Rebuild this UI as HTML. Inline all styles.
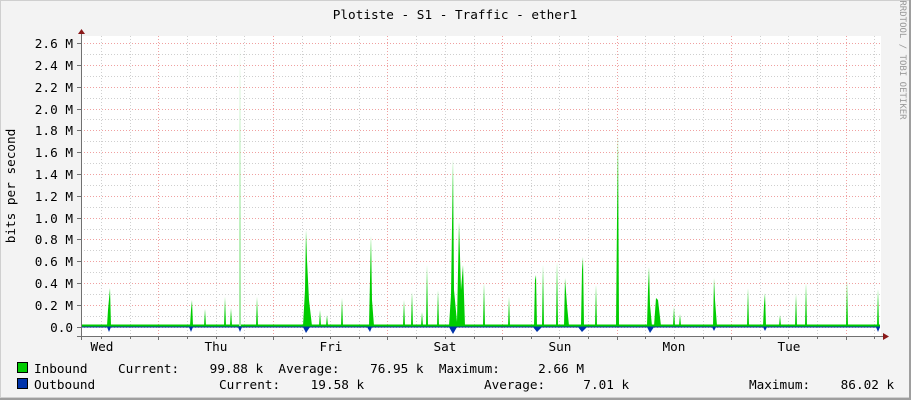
<!DOCTYPE html>
<html><head><meta charset="utf-8"><style>
html,body{margin:0;padding:0;background:#f3f3f3;}
svg{display:block;}
text{font-family:"DejaVu Sans Mono","Liberation Mono",monospace;font-size:12.7px;fill:#000;}
</style></head><body>
<svg width="911" height="400" viewBox="0 0 911 400" xmlns="http://www.w3.org/2000/svg">
<rect x="0" y="0" width="911" height="400" fill="#f3f3f3"/>
<rect x="0.5" y="0.5" width="909" height="397" fill="none" stroke="#cfcfcf"/>
<line x1="0" y1="399" x2="911" y2="399" stroke="#9e9e9e" stroke-width="2"/>
<line x1="910" y1="0" x2="910" y2="400" stroke="#9e9e9e" stroke-width="2"/>
<rect x="81" y="36" width="800" height="300" fill="#fff"/>
<g stroke="#cfcfcf" stroke-dasharray="1,2" stroke-width="1">
<line x1="81" y1="316.5" x2="881" y2="316.5"/><line x1="81" y1="294.5" x2="881" y2="294.5"/><line x1="81" y1="272.5" x2="881" y2="272.5"/><line x1="81" y1="250.5" x2="881" y2="250.5"/><line x1="81" y1="229.5" x2="881" y2="229.5"/><line x1="81" y1="207.5" x2="881" y2="207.5"/><line x1="81" y1="185.5" x2="881" y2="185.5"/><line x1="81" y1="163.5" x2="881" y2="163.5"/><line x1="81" y1="141.5" x2="881" y2="141.5"/><line x1="81" y1="119.5" x2="881" y2="119.5"/><line x1="81" y1="98.5" x2="881" y2="98.5"/><line x1="81" y1="76.5" x2="881" y2="76.5"/><line x1="81" y1="54.5" x2="881" y2="54.5"/>
<line x1="101.5" y1="36" x2="101.5" y2="336"/><line x1="130.5" y1="36" x2="130.5" y2="336"/><line x1="187.5" y1="36" x2="187.5" y2="336"/><line x1="216.5" y1="36" x2="216.5" y2="336"/><line x1="244.5" y1="36" x2="244.5" y2="336"/><line x1="302.5" y1="36" x2="302.5" y2="336"/><line x1="330.5" y1="36" x2="330.5" y2="336"/><line x1="359.5" y1="36" x2="359.5" y2="336"/><line x1="416.5" y1="36" x2="416.5" y2="336"/><line x1="445.5" y1="36" x2="445.5" y2="336"/><line x1="474.5" y1="36" x2="474.5" y2="336"/><line x1="531.5" y1="36" x2="531.5" y2="336"/><line x1="559.5" y1="36" x2="559.5" y2="336"/><line x1="588.5" y1="36" x2="588.5" y2="336"/><line x1="645.5" y1="36" x2="645.5" y2="336"/><line x1="674.5" y1="36" x2="674.5" y2="336"/><line x1="703.5" y1="36" x2="703.5" y2="336"/><line x1="760.5" y1="36" x2="760.5" y2="336"/><line x1="788.5" y1="36" x2="788.5" y2="336"/><line x1="817.5" y1="36" x2="817.5" y2="336"/><line x1="874.5" y1="36" x2="874.5" y2="336"/>
</g>
<g stroke="#f0a0a0" stroke-dasharray="1,2" stroke-width="1">
<line x1="81" y1="327.5" x2="881" y2="327.5"/><line x1="81" y1="305.5" x2="881" y2="305.5"/><line x1="81" y1="283.5" x2="881" y2="283.5"/><line x1="81" y1="261.5" x2="881" y2="261.5"/><line x1="81" y1="239.5" x2="881" y2="239.5"/><line x1="81" y1="218.5" x2="881" y2="218.5"/><line x1="81" y1="196.5" x2="881" y2="196.5"/><line x1="81" y1="174.5" x2="881" y2="174.5"/><line x1="81" y1="152.5" x2="881" y2="152.5"/><line x1="81" y1="130.5" x2="881" y2="130.5"/><line x1="81" y1="109.5" x2="881" y2="109.5"/><line x1="81" y1="87.5" x2="881" y2="87.5"/><line x1="81" y1="65.5" x2="881" y2="65.5"/><line x1="81" y1="43.5" x2="881" y2="43.5"/>
<line x1="158.5" y1="36" x2="158.5" y2="340"/><line x1="273.5" y1="36" x2="273.5" y2="340"/><line x1="387.5" y1="36" x2="387.5" y2="340"/><line x1="502.5" y1="36" x2="502.5" y2="340"/><line x1="617.5" y1="36" x2="617.5" y2="340"/><line x1="731.5" y1="36" x2="731.5" y2="340"/><line x1="846.5" y1="36" x2="846.5" y2="340"/>
</g>
<!-- outbound -->
<g fill="#0033aa">
<rect x="82" y="326" width="798" height="1.5"/>
<polygon points="107,327 109,332 111,327"/><polygon points="189,327 191,332 193,327"/><polygon points="238,327 240,332 242,327"/>
<polygon points="303,327 306,333 310,327"/><polygon points="367,327 370,332 372,327"/><polygon points="449,327 453,334 457,327"/>
<polygon points="533,327 537,332 542,327"/><polygon points="578,327 582,332 587,327"/><polygon points="647,327 650,333 654,327"/>
<polygon points="712,327 714,331 716,327"/><polygon points="763,327 765,331 767,327"/><polygon points="876,327 878,332 880,327"/>
</g>
<!-- inbound -->
<g fill="#00cc00">
<rect x="82" y="324.5" width="798" height="2"/>
<polygon points="107,326 108,310 110,288 111,326"/>
<polygon points="190,326 191,310 192,300 193,326"/><polygon points="204,326 205,309 206,326"/><polygon points="224,326 225,297 226,326"/><polygon points="230,326 231,308 232,326"/>
<polygon points="256,326 257,297 258,326"/>
<polygon points="303,326 305,290 306,230 307,260 309,300 312,326"/><polygon points="319,326 320,310 321,326"/><polygon points="326,326 327,315 328,326"/>
<polygon points="341,326 342,298 343,326"/><polygon points="369,326 370,280 371,236 372,300 374,326"/>
<polygon points="403,326 404,300 405,326"/><polygon points="411,326 412,292 413,326"/><polygon points="421,326 422,312 423,326"/><polygon points="426,326 427,265 428,326"/>
<polygon points="437,326 438,290 439,326"/><polygon points="449,326 451,295 453,159 454,290 457,322 459,222 461,290 463,265 465,326"/>
<polygon points="483,326 484,283 485,326"/><polygon points="508,326 509,297 510,326"/>
<polygon points="534,326 535,280 536,275 537,326"/><polygon points="542,326 543,265 544,326"/><polygon points="556,326 557,262 558,326"/><polygon points="564,326 565,278 567,305 569,326"/>
<polygon points="581,326 582,270 583,257 584,326"/><polygon points="595,326 596,285 597,326"/><polygon points="616,326 617,220 618,135 619,326"/>
<polygon points="647,326 648,290 649,267 650,305 652,326"/><polygon points="654,326 656,298 658,300 661,326"/><polygon points="673,326 674,307 675,326"/><polygon points="679,326 680,314 681,326"/>
<polygon points="713,326 714,278 715,300 717,326"/><polygon points="747,326 748,288 749,326"/><polygon points="763,326 764,305 765,293 766,326"/>
<polygon points="779,326 780,315 781,326"/><polygon points="795,326 796,294 797,326"/><polygon points="805,326 806,283 807,326"/>
<polygon points="846,326 847,281 848,326"/><polygon points="877,326 878,289 879,326"/>
</g>
<polygon points="239,326 240,40 241,326" fill="#9ee89e"/>
<!-- axes -->
<g stroke="#707070" stroke-width="1">
<line x1="81.5" y1="33" x2="81.5" y2="340"/>
<line x1="77" y1="336.5" x2="884" y2="336.5"/>
<line x1="77" y1="327.5" x2="81" y2="327.5"/><line x1="77" y1="305.5" x2="81" y2="305.5"/><line x1="77" y1="283.5" x2="81" y2="283.5"/><line x1="77" y1="261.5" x2="81" y2="261.5"/><line x1="77" y1="239.5" x2="81" y2="239.5"/><line x1="77" y1="218.5" x2="81" y2="218.5"/><line x1="77" y1="196.5" x2="81" y2="196.5"/><line x1="77" y1="174.5" x2="81" y2="174.5"/><line x1="77" y1="152.5" x2="81" y2="152.5"/><line x1="77" y1="130.5" x2="81" y2="130.5"/><line x1="77" y1="109.5" x2="81" y2="109.5"/><line x1="77" y1="87.5" x2="81" y2="87.5"/><line x1="77" y1="65.5" x2="81" y2="65.5"/><line x1="77" y1="43.5" x2="81" y2="43.5"/>
<line x1="101.5" y1="336" x2="101.5" y2="339"/><line x1="130.5" y1="336" x2="130.5" y2="339"/><line x1="158.5" y1="336" x2="158.5" y2="340"/><line x1="187.5" y1="336" x2="187.5" y2="339"/><line x1="216.5" y1="336" x2="216.5" y2="339"/><line x1="244.5" y1="336" x2="244.5" y2="339"/><line x1="273.5" y1="336" x2="273.5" y2="340"/><line x1="302.5" y1="336" x2="302.5" y2="339"/><line x1="330.5" y1="336" x2="330.5" y2="339"/><line x1="359.5" y1="336" x2="359.5" y2="339"/><line x1="387.5" y1="336" x2="387.5" y2="340"/><line x1="416.5" y1="336" x2="416.5" y2="339"/><line x1="445.5" y1="336" x2="445.5" y2="339"/><line x1="474.5" y1="336" x2="474.5" y2="339"/><line x1="502.5" y1="336" x2="502.5" y2="340"/><line x1="531.5" y1="336" x2="531.5" y2="339"/><line x1="559.5" y1="336" x2="559.5" y2="339"/><line x1="588.5" y1="336" x2="588.5" y2="339"/><line x1="617.5" y1="336" x2="617.5" y2="340"/><line x1="645.5" y1="336" x2="645.5" y2="339"/><line x1="674.5" y1="336" x2="674.5" y2="339"/><line x1="703.5" y1="336" x2="703.5" y2="339"/><line x1="731.5" y1="336" x2="731.5" y2="340"/><line x1="760.5" y1="336" x2="760.5" y2="339"/><line x1="788.5" y1="336" x2="788.5" y2="339"/><line x1="817.5" y1="336" x2="817.5" y2="339"/><line x1="846.5" y1="336" x2="846.5" y2="340"/><line x1="874.5" y1="336" x2="874.5" y2="339"/>
</g>
<polygon points="78,34 81.5,29 85,34" fill="#8b1a1a"/>
<polygon points="883,333 889,336.5 883,340" fill="#8b1a1a"/>
<text x="455" y="19" text-anchor="middle">Plotiste - S1 - Traffic - ether1</text>
<g text-anchor="end">
<text x="73" y="48">2.6 M</text><text x="73" y="70">2.4 M</text><text x="73" y="92">2.2 M</text><text x="73" y="114">2.0 M</text><text x="73" y="135">1.8 M</text><text x="73" y="157">1.6 M</text><text x="73" y="179">1.4 M</text><text x="73" y="201">1.2 M</text><text x="73" y="223">1.0 M</text><text x="73" y="244">0.8 M</text><text x="73" y="266">0.6 M</text><text x="73" y="288">0.4 M</text><text x="73" y="310">0.2 M</text><text x="73" y="332">0.0</text>
</g>
<text transform="translate(15,186) rotate(-90)" text-anchor="middle">bits per second</text>
<text transform="translate(900,60) rotate(90)" text-anchor="middle" style="font-size:9px;fill:#999">RRDTOOL / TOBI OETIKER</text>
<g text-anchor="middle">
<text x="102" y="351">Wed</text><text x="216" y="351">Thu</text><text x="331" y="351">Fri</text><text x="445" y="351">Sat</text><text x="560" y="351">Sun</text><text x="674" y="351">Mon</text><text x="789" y="351">Tue</text>
</g>
<rect x="17.5" y="362.5" width="10" height="10" fill="#00cc00" stroke="#000"/>
<rect x="17.5" y="378.5" width="10" height="10" fill="#0033aa" stroke="#000"/>
<text x="34" y="373" xml:space="preserve">Inbound    Current:    99.88 k  Average:    76.95 k  Maximum:     2.66 M</text>
<text x="34" y="389" xml:space="preserve">Outbound</text>
<text x="219" y="389" xml:space="preserve">Current:    19.58 k</text>
<text x="484" y="389" xml:space="preserve">Average:     7.01 k</text>
<text x="749" y="389" xml:space="preserve">Maximum:    86.02 k</text>
</svg>
</body></html>
